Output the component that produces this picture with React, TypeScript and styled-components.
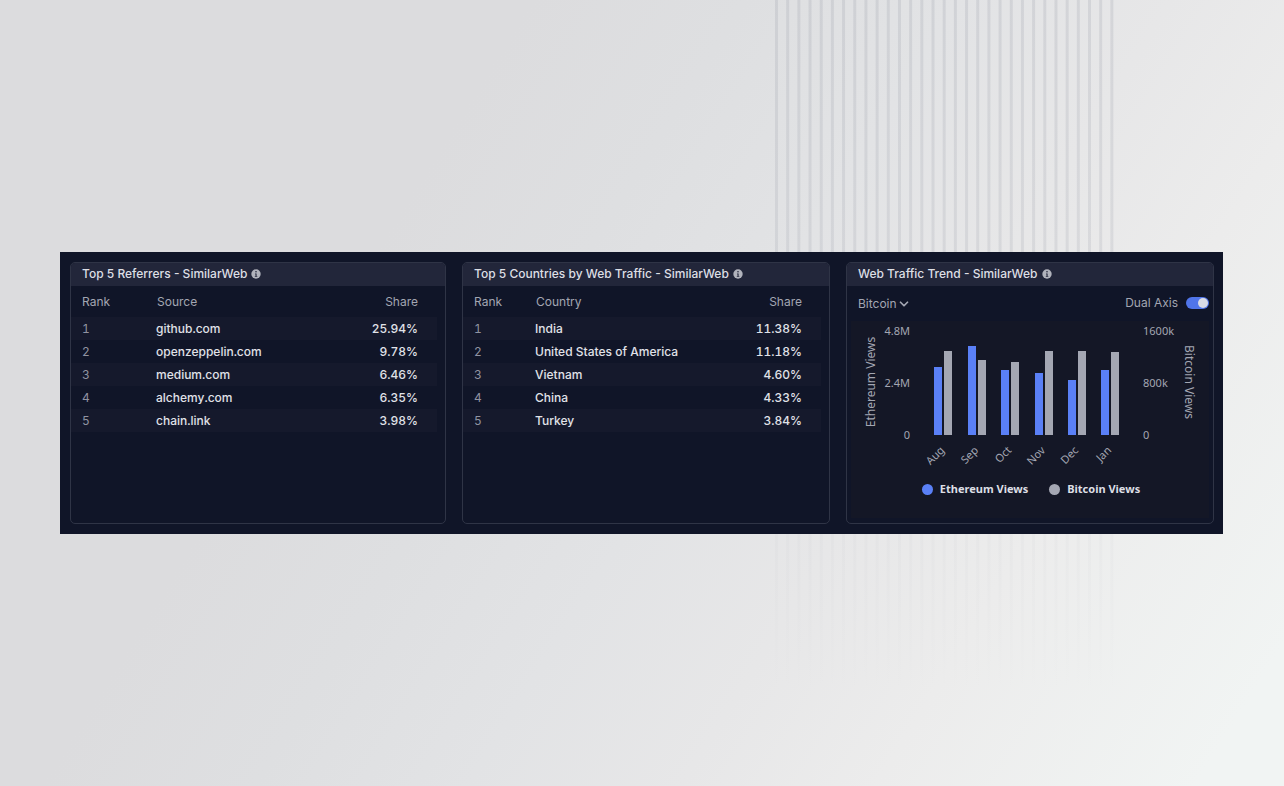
import React from "react";
import styled, { createGlobalStyle } from "styled-components";
import { ChevronDown } from "lucide-react";

const GlobalStyle = createGlobalStyle`
  * { box-sizing: border-box; }
  body {
    margin: 0;
    font-family: Inter, "Liberation Sans", sans-serif;
    font-size: 12px;
    color: #dddfe5;
  }
`;

const Page = styled.main`
  position: relative;
  min-height: 100vh;
  display: flex;
  align-items: center;
  padding: 0 61px 0 60px;
  background: linear-gradient(
    122deg,
    #dcdcde 0%,
    #dcdcde 30%,
    #dedfe1 42%,
    #e2e3e5 54%,
    #e7e7e8 66%,
    #ececec 77%,
    #f1f4f3 95%
  );
`;

const Backdrop = styled.svg`
  position: absolute;
  top: 0;
  left: 60.35%;
  width: 26.4%;
  height: 100%;
`;

const Panel = styled.div`
  position: relative;
  flex: 1;
  display: grid;
  grid-template-columns: minmax(0, 47fr) minmax(0, 46fr) minmax(0, 46fr);
  gap: 16px;
  padding: 10px 9px 10px 10px;
  background: #101528;
`;

const CardBox = styled.section`
  min-height: 262px;
  border: 1px solid #2f3446;
  border-radius: 5px;
  overflow: hidden;
`;

const CardHeader = styled.header`
  display: flex;
  align-items: center;
  gap: 4px;
  height: 23px;
  padding: 0 11px 1px;
  background: #22263a;
`;

const CardTitle = styled.h2`
  margin: 0;
  font-size: 12px;
  font-weight: 500;
  line-height: 16px;
`;

const InfoButton = styled.button`
  display: flex;
  padding: 0;
  border: 0;
  background: none;
  cursor: pointer;
`;

const Table = styled.table`
  width: calc(100% - 8px);
  border-collapse: collapse;
  table-layout: fixed;
  font-variant-numeric: tabular-nums;
`;

const HeadCell = styled.th<{ $width?: number; $right?: boolean }>`
  width: ${(p) => (p.$width ? `${p.$width}px` : "auto")};
  height: 31px;
  padding: 0 ${(p) => (p.$right ? 19 : 0)}px 1px
    ${(p) => (p.$right ? 0 : p.$width ? 11 : 1)}px;
  text-align: ${(p) => (p.$right ? "right" : "left")};
  font-weight: 400;
  color: #a3a6b2;
`;

const Row = styled.tr`
  &:nth-child(odd) {
    background: #15192c;
  }
`;

const Cell = styled.td<{ $kind: "rank" | "name" | "share" }>`
  height: 23px;
  padding: 0 ${(p) => (p.$kind === "share" ? 19 : 0)}px 0
    ${(p) => (p.$kind === "rank" ? 11 : 0)}px;
  text-align: ${(p) => (p.$kind === "share" ? "right" : "left")};
  font-weight: ${(p) => (p.$kind === "rank" ? 400 : 500)};
  white-space: nowrap;
  color: ${(p) => (p.$kind === "rank" ? "#9093a1" : "#e0e2e8")};
`;

const Controls = styled.div`
  display: flex;
  align-items: center;
  justify-content: space-between;
  height: 35px;
  padding: 0 4px 0 11px;
  color: #a3a6b2;
`;

const SelectWrap = styled.div`
  display: flex;
  align-items: center;
`;

const Select = styled.select`
  appearance: none;
  margin: 0 -14px 0 0;
  padding: 0 14px 0 0;
  border: 0;
  background: none;
  color: inherit;
  font: inherit;
  line-height: 16px;
`;

const Chevron = styled(ChevronDown)`
  pointer-events: none;
`;

const ToggleLabel = styled.label`
  display: flex;
  align-items: center;
  gap: 8px;
  padding-bottom: 2px;
`;

const Toggle = styled.input`
  appearance: none;
  display: flex;
  align-items: center;
  justify-content: flex-start;
  width: 23px;
  height: 12px;
  margin: 0;
  padding: 1px;
  border-radius: 6px;
  background: #444a60;
  &::before {
    content: "";
    width: 10px;
    height: 10px;
    border-radius: 50%;
    background: #d9dbe5;
  }
  &:checked {
    justify-content: flex-end;
    background: #5075ea;
  }
`;

const ChartArea = styled.figure`
  margin: 0 4px;
  height: 197px;
  background: #141726;
  font-family: "Noto Sans", "Open Sans", sans-serif;
`;

const ChartSvg = styled.svg`
  display: block;
  width: 100%;
  height: 152px;
  font-size: 11px;
  fill: #a3a6b2;
`;

const AxisTitle = styled.text`
  font-size: 12px;
`;

const Legend = styled.ul`
  display: flex;
  justify-content: center;
  gap: 21px;
  margin: 0;
  padding: 8px 0 0 2px;
  list-style: none;
`;

const LegendItem = styled.li<{ $color: string }>`
  display: flex;
  align-items: center;
  gap: 7px;
  font-size: 11px;
  font-weight: 700;
  line-height: 16px;
  &::before {
    content: "";
    width: 11px;
    height: 11px;
    border-radius: 50%;
    background: ${(p) => p.$color};
  }
`;

const BLUE = "#5a80f7";
const GRAY = "#a4a7b3";

const STRIPES = Array.from({ length: 31 }, (_, i) => i * 11.18);

const referrers = [
  ["github.com", "25.94%"],
  ["openzeppelin.com", "9.78%"],
  ["medium.com", "6.46%"],
  ["alchemy.com", "6.35%"],
  ["chain.link", "3.98%"],
];

const countries = [
  ["India", "11.38%"],
  ["United States of America", "11.18%"],
  ["Vietnam", "4.60%"],
  ["China", "4.33%"],
  ["Turkey", "3.84%"],
];

// Bar heights in chart units: 104 units span the full axis range.
const months = [
  { name: "Aug", eth: 68, btc: 84 },
  { name: "Sep", eth: 89, btc: 75 },
  { name: "Oct", eth: 65, btc: 73 },
  { name: "Nov", eth: 62, btc: 84 },
  { name: "Dec", eth: 55, btc: 84 },
  { name: "Jan", eth: 65, btc: 83 },
];

const BASELINE = 114;

function Card({ title, children }: { title: string; children: React.ReactNode }) {
  return (
    <CardBox>
      <CardHeader>
        <CardTitle>{title}</CardTitle>
        <InfoButton type="button" aria-label={`About ${title}`}>
          <svg width="10" height="10" viewBox="0 0 10 10">
            <circle cx="5" cy="5" r="4.7" fill="#b1b3bc" />
            <circle cx="5" cy="2.8" r="0.8" fill="#22263a" />
            <path d="M4 4.4h1.6v2.5h.7v.9H3.8v-.9h.7V5.3H4z" fill="#22263a" />
          </svg>
        </InfoButton>
      </CardHeader>
      {children}
    </CardBox>
  );
}

function RankTable({
  label,
  rankWidth,
  rows,
}: {
  label: string;
  rankWidth: number;
  rows: string[][];
}) {
  return (
    <Table>
      <thead>
        <tr>
          <HeadCell scope="col" $width={rankWidth}>
            Rank
          </HeadCell>
          <HeadCell scope="col">{label}</HeadCell>
          <HeadCell scope="col" $width={90} $right>
            Share
          </HeadCell>
        </tr>
      </thead>
      <tbody>
        {rows.map(([name, share], i) => (
          <Row key={name}>
            <Cell $kind="rank">{i + 1}</Cell>
            <Cell $kind="name">{name}</Cell>
            <Cell $kind="share">{share}</Cell>
          </Row>
        ))}
      </tbody>
    </Table>
  );
}

function TrendChart() {
  return (
    <ChartArea>
      <ChartSvg viewBox="0 0 358 152" role="img" aria-label="Monthly web traffic">
        <g textAnchor="end">
          <text x="59" y="14">4.8M</text>
          <text x="59" y="66">2.4M</text>
          <text x="59" y="118">0</text>
        </g>
        <text x="292" y="14">1600k</text>
        <text x="292" y="66">800k</text>
        <text x="292" y="118">0</text>
        <AxisTitle textAnchor="middle" transform="translate(24 61) rotate(-90)">
          Ethereum Views
        </AxisTitle>
        <AxisTitle textAnchor="middle" transform="translate(334 61) rotate(90)">
          Bitcoin Views
        </AxisTitle>
        {months.map((m, i) => {
          const x = Math.round(83.4 + i * 33.4);
          return (
            <g key={m.name}>
              <rect x={x} y={BASELINE - m.eth} width="8" height={m.eth} fill={BLUE} />
              <rect x={x + 10} y={BASELINE - m.btc} width="8" height={m.btc} fill={GRAY} />
              <text textAnchor="end" transform={`translate(${x + 11} 130) rotate(-45)`}>
                {m.name}
              </text>
            </g>
          );
        })}
      </ChartSvg>
      <Legend>
        <LegendItem $color={BLUE}>Ethereum Views</LegendItem>
        <LegendItem $color={GRAY}>Bitcoin Views</LegendItem>
      </Legend>
    </ChartArea>
  );
}

export default function App() {
  return (
    <>
      <GlobalStyle />
      <Page>
        <Backdrop viewBox="0 0 339 786" preserveAspectRatio="none" aria-hidden="true">
          <defs>
            <linearGradient id="fade" gradientUnits="userSpaceOnUse" x1="0" y1="0" x2="0" y2="786">
              <stop offset="0" stopColor="#9498a4" stopOpacity="0.22" />
              <stop offset="0.32" stopColor="#9498a4" stopOpacity="0.19" />
              <stop offset="0.68" stopColor="#9498a4" stopOpacity="0.05" />
              <stop offset="0.88" stopColor="#9498a4" stopOpacity="0" />
            </linearGradient>
          </defs>
          {STRIPES.map((x) => (
            <rect key={x} x={x} y="0" width="3" height="786" fill="url(#fade)" />
          ))}
        </Backdrop>
        <Panel>
          <Card title="Top 5 Referrers - SimilarWeb">
            <RankTable label="Source" rankWidth={85} rows={referrers} />
          </Card>
          <Card title="Top 5 Countries by Web Traffic - SimilarWeb">
            <RankTable label="Country" rankWidth={72} rows={countries} />
          </Card>
          <Card title="Web Traffic Trend - SimilarWeb">
            <Controls>
              <SelectWrap>
                <Select aria-label="Compare with" defaultValue="Bitcoin">
                  <option>Bitcoin</option>
                </Select>
                <Chevron size={14} strokeWidth={3} />
              </SelectWrap>
              <ToggleLabel>
                Dual Axis
                <Toggle type="checkbox" role="switch" defaultChecked />
              </ToggleLabel>
            </Controls>
            <TrendChart />
          </Card>
        </Panel>
      </Page>
    </>
  );
}
